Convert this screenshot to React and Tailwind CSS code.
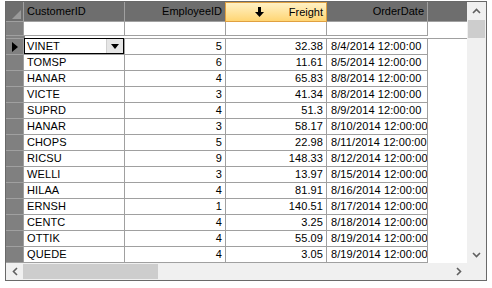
import React from "react";

const rows = [
  ["VINET", 5, "32.38", "8/4/2014 12:00:00"],
  ["TOMSP", 6, "11.61", "8/5/2014 12:00:00"],
  ["HANAR", 4, "65.83", "8/8/2014 12:00:00"],
  ["VICTE", 3, "41.34", "8/8/2014 12:00:00"],
  ["SUPRD", 4, "51.3", "8/9/2014 12:00:00"],
  ["HANAR", 3, "58.17", "8/10/2014 12:00:00"],
  ["CHOPS", 5, "22.98", "8/11/2014 12:00:00"],
  ["RICSU", 9, "148.33", "8/12/2014 12:00:00"],
  ["WELLI", 3, "13.97", "8/15/2014 12:00:00"],
  ["HILAA", 4, "81.91", "8/16/2014 12:00:00"],
  ["ERNSH", 1, "140.51", "8/17/2014 12:00:00"],
  ["CENTC", 4, "3.25", "8/18/2014 12:00:00"],
  ["OTTIK", 4, "55.09", "8/19/2014 12:00:00"],
  ["QUEDE", 4, "3.05", "8/19/2014 12:00:00"],
];

const cell = "w-[101px] shrink-0 border-r border-b border-[#a0a0a0] overflow-hidden whitespace-nowrap px-[3px]";

function RowHead({ current, h }) {
  return (
    <div className={`w-[18px] shrink-0 ${h} bg-[#808080] border-r border-b border-[#a0a0a0] flex items-center justify-center`}>
      {current && (
        <svg width="6" height="10" viewBox="0 0 6 10">
          <path d="M0 0 L6 5 L0 10 Z" fill="#000" />
        </svg>
      )}
    </div>
  );
}

export default function App() {
  return (
    <div className="w-[492px] h-[288px] bg-white pt-[1px] pl-[5px]" style={{ fontFamily: '"Liberation Sans", Arial, sans-serif' }}>
      <div className="w-[482px] h-[280px] border border-[#696969] flex flex-col text-[11px] text-black leading-none">
        <div className="flex flex-1 min-h-0">
          <div className="flex-1 min-w-0 overflow-hidden flex flex-col">
            {/* header */}
            <div className="flex h-[21px] bg-[#6e6e6e]">
              <div className="w-[18px] shrink-0 border-r border-b border-[#a0a0a0] flex items-end justify-end p-[2px]">
                <svg width="9" height="9" viewBox="0 0 9 9">
                  <path d="M9 0 L9 9 L0 9 Z" fill="#9a9a9a" />
                </svg>
              </div>
              <div className={`${cell} flex items-center`}>CustomerID</div>
              <div className={`${cell} flex items-center justify-end`}>EmployeeID</div>
              <div className="shrink-0 border border-[#e0a040] bg-gradient-to-b from-[#fff1c4] to-[#ffd572] flex items-center px-[3px] -ml-[1px] w-[102px]">
                <svg width="9" height="10" viewBox="0 0 9 10" className="ml-[26px]">
                  <rect x="3" y="0" width="3" height="5" fill="#000" />
                  <path d="M0 5 L9 5 L4.5 10 Z" fill="#000" />
                </svg>
                <span className="ml-auto">Freight</span>
              </div>
              <div className={`${cell} flex items-center justify-end`}>OrderDate</div>
              <div className="flex-1 border-b border-[#a0a0a0]" />
            </div>
            {/* filter row */}
            <div className="flex h-[14px]">
              <RowHead h="h-[14px]" />
              <div className={cell} />
              <div className={cell} />
              <div className={cell} />
              <div className={cell} />
            </div>
            <div className="h-[3px] border-b border-[#a0a0a0] flex">
              <div className="w-[19px] bg-[#808080]" />
            </div>
            {rows.map((r, i) => (
              <div key={i} className="flex h-[16px] tracking-[0.1px]">
                <RowHead h="h-[16px]" current={i === 0} />
                {i === 0 ? (
                  <div className="w-[101px] shrink-0 border-r border-b border-[#a0a0a0] flex">
                    <div className="flex-1 flex items-center border border-black pl-[2px] -mt-[1px]">
                      <span>{r[0]}</span>
                      <div className="ml-auto h-full w-[17px] bg-[#e6e6e6] border-l border-[#d0d0d0] flex items-center justify-center">
                        <svg width="8" height="5" viewBox="0 0 8 5">
                          <path d="M0 0 L8 0 L4 5 Z" fill="#000" />
                        </svg>
                      </div>
                    </div>
                  </div>
                ) : (
                  <div className={`${cell} flex items-center`}>{r[0]}</div>
                )}
                <div className={`${cell} flex items-center justify-end`}>{r[1]}</div>
                <div className={`${cell} flex items-center justify-end`}>{r[2]}</div>
                <div className={`${cell} flex items-center pl-[4px]`}>{r[3]}</div>
              </div>
            ))}
          </div>
          {/* vertical scrollbar */}
          <div className="w-[19px] shrink-0 bg-[#f0f0f0] flex flex-col">
            <div className="h-[18px] flex items-center justify-center">
              <svg width="9" height="6" viewBox="0 0 9 6">
                <path d="M1 5 L4.5 1.5 L8 5" stroke="#606060" strokeWidth="1.6" fill="none" />
              </svg>
            </div>
            <div className="mx-[1px] h-[18px] bg-[#cdcdcd]" />
            <div className="flex-1" />
            <div className="h-[17px] flex items-center justify-center">
              <svg width="9" height="6" viewBox="0 0 9 6">
                <path d="M1 1 L4.5 4.5 L8 1" stroke="#606060" strokeWidth="1.6" fill="none" />
              </svg>
            </div>
          </div>
        </div>
        {/* horizontal scrollbar */}
        <div className="h-[17px] shrink-0 flex bg-[#f0f0f0]">
          <div className="w-[17px] flex items-center justify-center">
            <svg width="6" height="9" viewBox="0 0 6 9">
              <path d="M5 1 L1.5 4.5 L5 8" stroke="#606060" strokeWidth="1.6" fill="none" />
            </svg>
          </div>
          <div className="w-[135px] my-[1px] bg-[#cdcdcd]" />
          <div className="flex-1" />
          <div className="w-[17px] flex items-center justify-center">
            <svg width="6" height="9" viewBox="0 0 6 9">
              <path d="M1 1 L4.5 4.5 L1 8" stroke="#606060" strokeWidth="1.6" fill="none" />
            </svg>
          </div>
          <div className="w-[19px] bg-[#f0f0f0]" />
        </div>
      </div>
    </div>
  );
}
